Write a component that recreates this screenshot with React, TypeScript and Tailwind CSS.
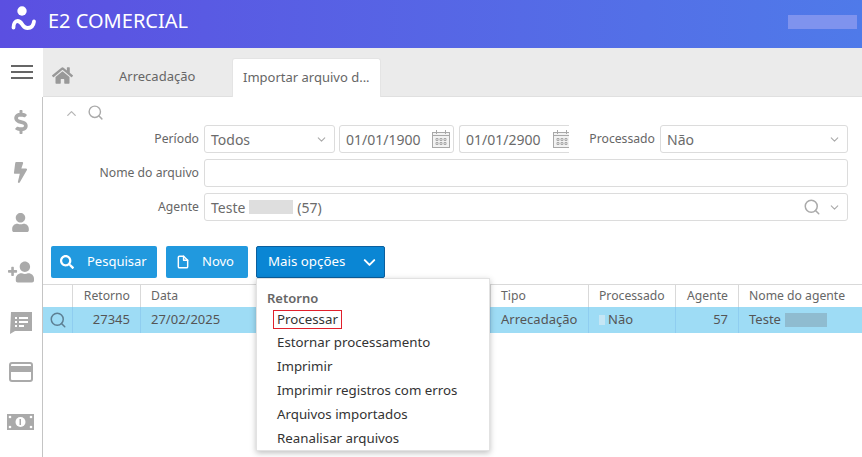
import React from "react";
import { FaDollarSign, FaBolt, FaUser, FaUserPlus, FaHome, FaSearch } from "react-icons/fa";
import { FiSearch, FiChevronDown, FiChevronUp, FiFile } from "react-icons/fi";

const Cal = () => (
  <svg width="20" height="20" viewBox="0 0 20 20" fill="none" stroke="#a8a8a8" strokeWidth="1" className="shrink-0">
    <rect x="1.5" y="3.5" width="17" height="15" fill="#f2f2f2" />
    <path d="M1.5 6.5h17M5.5 1v4M14.5 1v4" />
    <path d="M5 9.5h2v2H5zM9 9.5h2v2H9zM13 9.5h2v2h-2zM5 13.5h2v2H5zM9 13.5h2v2H9zM13 13.5h2v2h-2z" />
  </svg>
);

const Field = ({ className = "", children }: { className?: string; children?: React.ReactNode }) => (
  <div className={`h-7 flex items-center bg-white border border-[#dcdcdc] rounded-[3px] pl-[6px] text-[14px] text-[#6b6b6b] ${className}`}>
    {children}
  </div>
);

const Label = ({ w, children }: { w: string; children: React.ReactNode }) => (
  <div className={`${w} shrink-0 text-right text-[12.2px] text-[#666]`}>{children}</div>
);

const Th = ({ className = "", children }: { className?: string; children?: React.ReactNode }) => (
  <div className={`flex items-center border-r border-[#d9d9d9] px-[10px] text-[12.2px] text-[#666] ${className}`}>{children}</div>
);
const Td = ({ className = "", children }: { className?: string; children?: React.ReactNode }) => (
  <div className={`flex items-center border-r border-[#8fcdf0] px-[10px] text-[13px] text-[#555] ${className}`}>{children}</div>
);

const cols = "grid grid-cols-[30px_68px_350px_98px_87px_63px_1fr]";

export default function App() {
  return (
    <div className="w-[862px] h-[457px] overflow-hidden bg-white flex flex-col relative" style={{ fontFamily: '"Noto Sans", sans-serif' }}>
      <header className="h-12 shrink-0 flex items-center justify-between bg-gradient-to-r from-[#5b4fe1] to-[#4f7ae9] pl-[11px] pr-[5px]">
        <div className="flex items-center gap-[11px] mb-[6px]">
          <svg width="26" height="24" viewBox="0 0 26 24" fill="none" className="mb-[6px]">
            <circle cx="11" cy="5" r="4.700" fill="#fff" />
            <path d="M2.500 21.500c0-4 1.800-6.500 4-6.500 3 0 4 2.500 5.500 4.500 1.200 1.600 2.700 2.500 4.500 2.500 3.500 0 6-2.500 6.500-6.500" stroke="#fff" strokeWidth="3.800" strokeLinecap="round" />
          </svg>
          <span className="text-[20px] font-normal text-white leading-none">E2 COMERCIAL</span>
        </div>
        <div className="w-[69px] h-[14px] bg-[#7f93ee] mb-1" />
      </header>

      <div className="flex-1 flex min-h-0">
        <aside className="w-[43px] shrink-0 flex flex-col">
          <div className="h-[49px] flex items-center justify-center">
            <svg width="22" height="15" viewBox="0 0 22 15" fill="#666"><rect width="22" height="2" /><rect y="6" width="22" height="2" /><rect y="12" width="22" height="2" /></svg>
          </div>
          <div className="flex-1 border-r border-[#c4c4c4] flex flex-col items-center text-[#aaaaaa] pr-[1px]">
            <div className="h-[50px] flex items-center justify-center"><FaDollarSign size={24} /></div>
            <div className="h-[50px] flex items-center justify-center"><FaBolt size={21} /></div>
            <div className="h-[50px] flex items-center justify-center"><FaUser size={19} /></div>
            <div className="h-[50px] flex items-center justify-center"><FaUserPlus size={26} className="-scale-x-100" /></div>
            <div className="h-[50px] flex items-center justify-center">
              <svg width="24" height="24" viewBox="0 0 24 24" fill="#aaa"><path d="M2 2h21v19H6l-5 3z" /><path d="M6 7h2v2H6zM10 7h9v2h-9zM6 11h2v2H6zM10 11h9v2h-9zM6 15h2v2H6zM10 15h5v2h-5z" fill="#fff" /></svg>
            </div>
            <div className="h-[50px] flex items-center justify-center">
              <svg width="24" height="20" viewBox="0 0 24 20" fill="none" stroke="#aaa" strokeWidth="2"><rect x="1" y="1" width="22" height="18" rx="2" /><rect x="1" y="5" width="22" height="4" fill="#aaa" /></svg>
            </div>
            <div className="h-[50px] flex items-center justify-center">
              <svg width="27" height="16" viewBox="0 0 27 16" fill="#aaa"><path d="M0 0h27v16H0z" /><circle cx="13.500" cy="8" r="5" fill="#fff" /><path d="M12.500 5h1.500v6h-1.500z" /><circle cx="3" cy="3" r="1.300" fill="#fff" /><circle cx="24" cy="3" r="1.300" fill="#fff" /><circle cx="3" cy="13" r="1.300" fill="#fff" /><circle cx="24" cy="13" r="1.300" fill="#fff" /></svg>
            </div>
          </div>
        </aside>

        <main className="flex-1 min-w-0 flex flex-col">
          <div className="h-[49px] shrink-0 bg-[#ebebeb] border-b border-[#e0e0e0] flex items-end pl-[9px]">
            <div className="h-[48px] pt-[6px] flex items-center text-[#999]"><FaHome size={21} /></div>
            <div className="h-[38px] w-[159px] pl-[46px] flex items-center text-[13px] text-[#666]">Arrecadação</div>
            <div className="h-[39px] w-[149px] -mb-[1px] bg-white rounded-t-[3px] border border-b-0 border-[#e4e4e4] flex items-center pl-[10px] text-[13px] text-[#666]">Importar arquivo d...</div>
          </div>

          <div className="pl-[21px] pt-2 h-[28px] flex items-center gap-[8px] text-[#b5b5b5]">
            <FiChevronUp size={15} className="-mt-[4px]" />
            <FiSearch size={17} className="text-[#aaa] -mt-[6px]" />
          </div>

          <div className="flex flex-col gap-[6px] pr-[14px]">
            <div className="flex items-center">
              <Label w="w-[161px] pr-[5px]">Período</Label>
              <Field className="w-[131px] justify-between pr-[6px]">Todos<FiChevronDown size={13} className="text-[#aaa]" /></Field>
              <Field className="w-[115px] ml-[4px] justify-between pr-[2px]">01/01/1900<Cal /></Field>
              <Field className="w-[110px] ml-[5px] justify-between border-r-0 rounded-r-none pr-0 overflow-hidden">01/01/2900<span className="-mr-[3px]"><Cal /></span></Field>
              <Label w="w-[91px] pr-[5px]">Processado</Label>
              <Field className="flex-1 justify-between pr-[6px]">Não<FiChevronDown size={13} className="text-[#aaa]" /></Field>
            </div>
            <div className="flex items-center">
              <Label w="w-[161px] pr-[5px]">Nome do arquivo</Label>
              <Field className="flex-1" />
            </div>
            <div className="flex items-center">
              <Label w="w-[161px] pr-[5px]">Agente</Label>
              <Field className="flex-1 justify-between pr-[6px] text-[13px]">
                <span className="flex items-center gap-1">Teste <span className="inline-block w-11 h-[14px] bg-[#dedede]" /> (57)</span>
                <span className="flex items-center gap-[7px] text-[#aaa]"><FiSearch size={18} /><FiChevronDown size={13} /></span>
              </Field>
            </div>
          </div>

          <div className="flex mt-[25px] ml-[8px] text-[13px] text-white">
            <button className="h-8 w-[106px] bg-[#2199de] rounded-[2px] flex items-center pl-[9px] gap-[13px]"><FaSearch size={14} />Pesquisar</button>
            <button className="h-8 w-[82px] ml-[9px] bg-[#2199de] rounded-[2px] flex items-center pl-[10px] gap-[12px]"><FiFile size={14} strokeWidth={2.500} />Novo</button>
            <button className="h-8 w-[129px] ml-[8px] bg-[#0a86d4] border border-[#0b5f9e] rounded-[2px] flex items-center pl-[11px] gap-[15px] text-[13.3px]">Mais opções<FiChevronDown size={19} strokeWidth={2.500} /></button>
          </div>

          <div className="mt-[6px] border-t border-[#d9d9d9]">
            <div className={`${cols} h-[22px]`}>
              <Th />
              <Th className="justify-end">Retorno</Th>
              <Th>Data</Th>
              <Th>Tipo</Th>
              <Th>Processado</Th>
              <Th className="justify-end">Agente</Th>
              <Th className="border-r-0">Nome do agente</Th>
            </div>
            <div className={`${cols} h-[26px] bg-[#9edcf5]`}>
              <div className="flex items-center justify-center border-r border-[#8fcdf0]"><FiSearch size={18} className="text-[#5d7f93]" /></div>
              <Td className="justify-end">27345</Td>
              <Td>27/02/2025</Td>
              <Td>Arrecadação</Td>
              <Td><span className="w-[6px] h-[10px] bg-[#c5e6f5] mr-[3px]" />Não</Td>
              <Td className="justify-end">57</Td>
              <Td className="border-r-0">Teste <span className="w-[42px] h-[14px] ml-1 bg-[#8fbcd0]" /></Td>
            </div>
          </div>
        </main>
      </div>

      <div className="absolute left-[256px] top-[278px] w-[234px] h-[173px] bg-white border border-[#e2e2e2] shadow-[0_2px_6px_rgba(0,0,0,0.25)] pl-[10px] pt-[10px] text-[#333]">
        <div className="text-[13px] font-semibold text-[#666] leading-[18px]">Retorno</div>
        <div className="flex flex-col pl-[10px]">
          <div className="h-[24px] flex items-center"><span className="border border-[#e0202c] px-[3px] -ml-[4px] leading-[17px] text-[13.3px]">Processar</span></div>
          {["Estornar processamento", "Imprimir", "Imprimir registros com erros", "Arquivos importados", "Reanalisar arquivos"].map((t) => (
            <div key={t} className="h-[24px] flex items-center text-[13.3px]">{t}</div>
          ))}
        </div>
      </div>
    </div>
  );
}
